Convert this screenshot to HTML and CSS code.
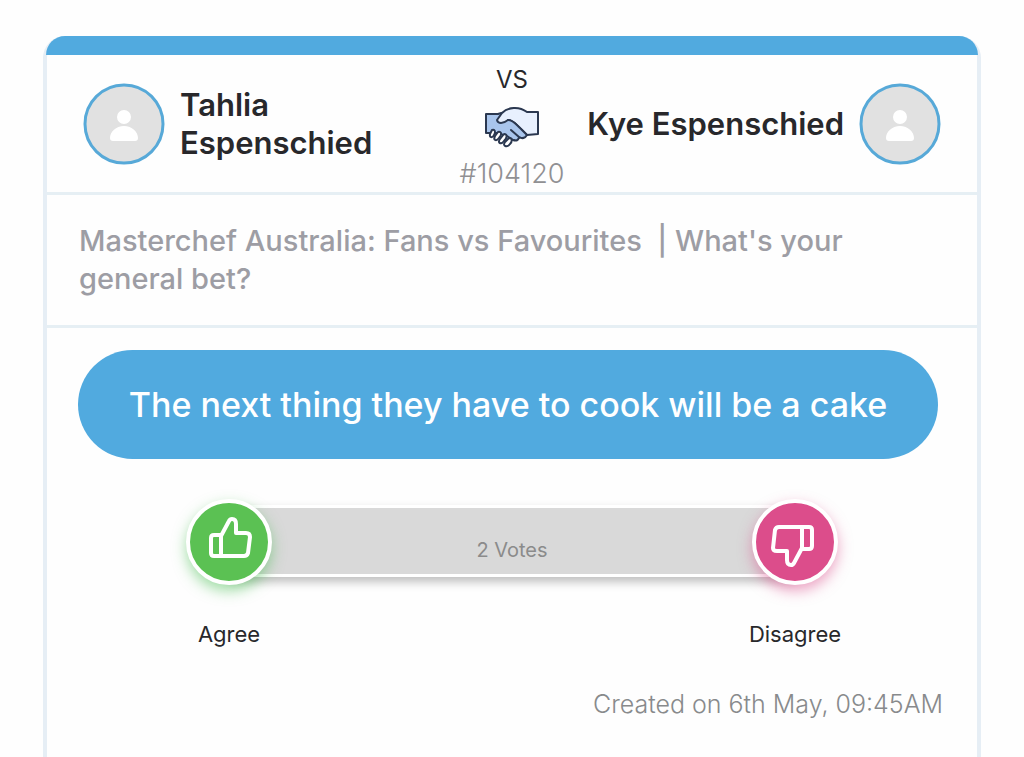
FILE: index.html
```html
<!DOCTYPE html>
<html lang="en">
<head>
  <meta charset="UTF-8">
  <meta name="viewport" content="width=device-width, initial-scale=1.0">
  <title>Bet #104120</title>
  <link rel="stylesheet" href="styles.css">
</head>
<body>
  <main class="card">
    <!-- Players -->
    <header class="players">
      <div class="player">
        <svg class="avatar" viewBox="0 0 82 82" aria-hidden="true">
          <circle cx="41" cy="41" r="39" />
          <path d="M41 27a7 7 0 1 1 0 14a7 7 0 1 1 0-14zM27 55c0-6 6-12 14-12s14 6 14 12q0 3-3 3H30q-3 0-3-3z" />
        </svg>
        <h2 class="name">Tahlia Espenschied</h2>
      </div>

      <div class="versus">
        <span class="vs">VS</span>
        <svg class="handshake" viewBox="0 0 56 42" aria-hidden="true">
          <g stroke="#2b3850" stroke-width="2" stroke-linejoin="round" stroke-linecap="round">
            <path fill="#a9c5ec" d="M2 8H14C19 6 24 6 29 10L42 27L35 32L26 34L16 27H2z" />
            <path fill="#e8f0fe" d="M54 6H43C35 0 24 1 18 7L13 14C14 18 19 18 24 14C29 14 33 19 37 23L43 29L54 28z" />
            <path fill="#a9c5ec" d="M24 14C29 14 33 19 37 23L43 29C41 32 38 32 35 30C37 33 33 35 30 33C28 36 24 35 22 33" stroke="none" />
            <path fill="none" d="M24 14C30 14 33 20 37 23L43 29M27 24L35 31M23 30L29 34M43 29Q40 34 35 31Q34 36 29 34" />
            <path fill="#fff" d="M8 24C11 23 12 26 10 29C9 32 5 32 6 28z" />
            <path fill="#fff" d="M14 26C18 25 18 29 15 32C12 36 9 34 11 30z" />
            <path fill="#fff" d="M20 28C24 28 23 32 20 35C17 39 13 37 16 33z" />
            <path fill="#fff" d="M25 32C29 32 28 36 26 38C23 42 18 40 21 36z" />
          </g>
        </svg>
        <span class="bet-id">#104120</span>
      </div>

      <div class="player player-right">
        <h2 class="name">Kye Espenschied</h2>
        <svg class="avatar" viewBox="0 0 82 82" aria-hidden="true">
          <circle cx="41" cy="41" r="39" />
          <path d="M41 27a7 7 0 1 1 0 14a7 7 0 1 1 0-14zM27 55c0-6 6-12 14-12s14 6 14 12q0 3-3 3H30q-3 0-3-3z" />
        </svg>
      </div>
    </header>

    <p class="topic">Masterchef Australia: Fans vs Favourites &nbsp;| What's your general bet?</p>

    <section class="bet">
      <h1 class="statement">The next thing they have to cook will be a cake</h1>

      <!-- Voting -->
      <div class="votes">
        <div class="choice">
          <button class="thumb agree" id="agree" type="button">
            <svg viewBox="-1 4 44 44" aria-hidden="true">
              <path d="M13 19H6Q3 19 3 22V37Q3 40 6 40H36Q39 40 40 37L42 21Q42 17 38 17H28V8Q28 3 24 3Q22 3 21 5L13 20V40" />
            </svg>
          </button>
          <label for="agree">Agree</label>
        </div>
        <div class="bar">2 Votes</div>
        <div class="choice">
          <button class="thumb disagree" id="disagree" type="button">
            <svg viewBox="2 -2 44 44" aria-hidden="true">
              <path d="M31 27H38Q41 27 41 24V8Q41 5 38 5H8Q5 5 4 8L2 26Q2 29 6 29H16V38Q16 43 20 43Q22 43 23 41L31 26V5" />
            </svg>
          </button>
          <label for="disagree">Disagree</label>
        </div>
      </div>

      <p class="created">Created on 6th May, 09:45AM</p>
    </section>
  </main>
</body>
</html>
```

FILE: styles.css
```css
* {
    box-sizing: border-box;
}

body {
    margin: 0;
    padding: 36px 43px 0;
    background-color: #fefefe;
    color: #28282b;
    font-family: Inter, "Liberation Sans", sans-serif;
}

.card {
    min-height: calc(100vh - 36px);
    border: 4px solid #e6eef5;
    border-top: 0;
    border-bottom: 0;
    border-radius: 22px 22px 0 0;
    background-color: #fefefe;
}

/* Blue strip on top of the card */
.card::before {
    content: "";
    display: block;
    height: 19px;
    margin: 0 -1px;
    border-radius: 19px 19px 0 0;
    background-color: #51aadf;
}

.players {
    display: grid;
    grid-template-columns: 1fr auto 1fr;
    align-items: center;
    height: 140px;
    padding: 0 36px;
    border-bottom: 3px solid #e6eff4;
}

.player {
    display: flex;
    align-items: center;
    gap: 15px;
}

.player-right {
    justify-content: flex-end;
}

.avatar {
    flex: none;
    width: 82px;
    height: 82px;
}

.avatar circle {
    fill: #e1e1e1;
    stroke: #57a9d8;
    stroke-width: 3;
}

.avatar path {
    fill: #fff;
}

.name {
    margin: 0;
    font-size: 31px;
    font-weight: 600;
    line-height: 38px;
}

.versus {
    display: flex;
    flex-direction: column;
    align-items: center;
    gap: 12px;
    padding-top: 7px;
}

.vs {
    font-size: 24px;
    line-height: 28px;
}

.handshake {
    width: 56px;
    height: 42px;
}

.bet-id {
    color: #909093;
    font-size: 27px;
    font-weight: 300;
    line-height: 28px;
}

.topic {
    margin: 0;
    padding: 27px 80px 27px 32px;
    border-bottom: 3px solid #e6eff4;
    color: #9d9da4;
    font-size: 29px;
    font-weight: 500;
    line-height: 38px;
}

.bet {
    padding: 22px 32px 0;
}

.statement {
    margin: 0 7px 0 -1px;
    padding: 32px 20px;
    border-radius: 55px;
    background-color: #51aadf;
    color: #fff;
    font-size: 34px;
    font-weight: 500;
    line-height: 45px;
    text-align: center;
}

.votes {
    display: flex;
    align-items: flex-start;
    margin-top: 40px;
    padding: 0 104px;
}

.choice {
    display: flex;
    flex-direction: column;
    align-items: center;
    gap: 34px;
    width: 92px;
    font-size: 22px;
    line-height: 30px;
}

.thumb {
    display: flex;
    align-items: center;
    justify-content: center;
    position: relative;
    width: 86px;
    height: 86px;
    padding: 0;
    border: 4px solid #fff;
    border-radius: 50%;
    cursor: pointer;
}

.thumb svg {
    width: 44px;
    height: 44px;
    overflow: visible;
    fill: none;
    stroke: #fff;
    stroke-width: 4;
    stroke-linejoin: round;
}

.agree {
    background-color: #5bc153;
    box-shadow: 0 6px 14px rgba(70, 190, 80, 0.5);
}

.disagree {
    background-color: #dc4d8b;
    box-shadow: 0 6px 14px rgba(220, 77, 139, 0.5);
}

/* Runs underneath both thumbs */
.bar {
    flex: 1;
    height: 72px;
    margin: 6px -46px 0;
    padding-top: 10px;
    border: 3px solid #fff;
    background-color: #d9d9d9;
    box-shadow: 0 5px 9px rgba(0, 0, 0, 0.25);
    color: #8b8b8b;
    font-size: 20px;
    line-height: 64px;
    text-align: center;
}

.created {
    margin: 39px 2px 0;
    color: #888a8c;
    font-size: 25px;
    font-weight: 300;
    line-height: 32px;
    text-align: right;
}
```
